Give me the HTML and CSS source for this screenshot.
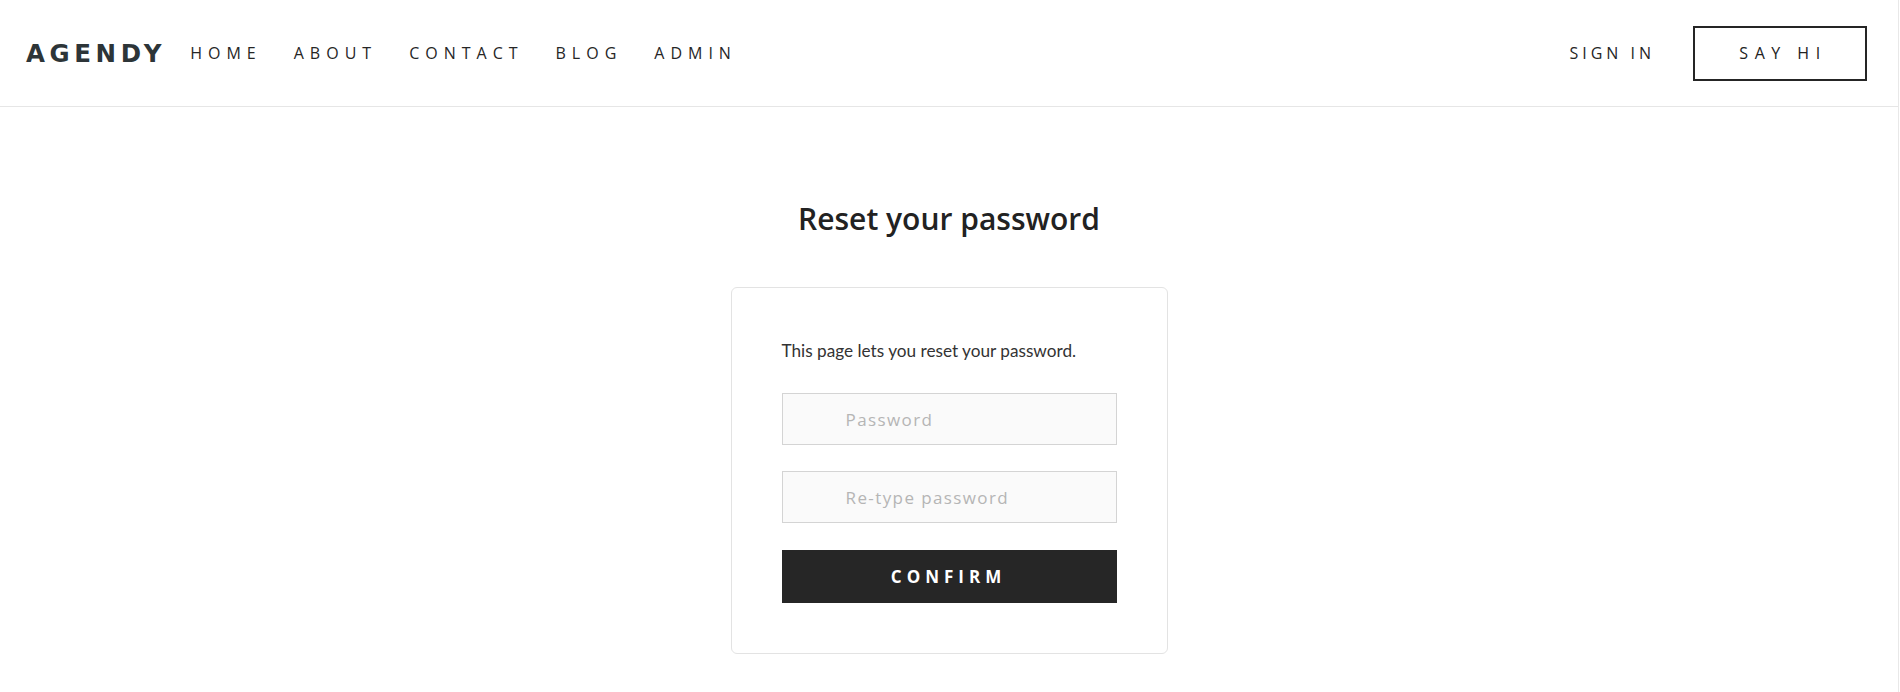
FILE: index.html
```html
<!DOCTYPE html>
<html lang="en">
<head>
<meta charset="utf-8">
<title>Reset your password</title>
<link rel="stylesheet" href="styles.css">
</head>
<body>
<div class="page">
<header class="topbar">
  <div class="topbar-left">
    <a class="logo" href="#">AGENDY</a>
    <nav class="main-nav">
      <a href="#">HOME</a>
      <a href="#">ABOUT</a>
      <a href="#">CONTACT</a>
      <a href="#">BLOG</a>
      <a href="#">ADMIN</a>
    </nav>
  </div>
  <div class="topbar-right">
    <a class="sign-in" href="#">SIGN IN</a>
    <a class="say-hi" href="#">SAY HI</a>
  </div>
</header>
<main class="content">
  <h1 class="title">Reset your password</h1>
  <form class="card">
    <p class="intro">This page lets you reset your password.</p>
    <input class="field" type="password" placeholder="Password">
    <input class="field" type="password" placeholder="Re-type password">
    <button class="confirm" type="button">CONFIRM</button>
  </form>
</main>
</div>
</body>
</html>
```

FILE: styles.css
```css
* { box-sizing: border-box; }
html, body { margin: 0; padding: 0; background: #fff; }
body { font-family: "Open Sans", "Liberation Sans", sans-serif; color: #333; }
a { text-decoration: none; color: inherit; }

.page {
  min-height: 100vh;
  margin-right: 1px;
  border-right: 1px solid #e8e8e8;
}

.topbar {
  height: 107px;
  border-bottom: 1px solid #e6e6e6;
  display: flex;
  align-items: center;
  justify-content: space-between;
  padding: 0 31px 0 26px;
}
.topbar-left { display: flex; align-items: center; }
.logo {
  font-family: "DejaVu Sans", Inter, sans-serif;
  font-weight: 700;
  font-size: 24.5px;
  letter-spacing: 4.6px;
  color: #2d3538;
  margin-right: 24px;
}
.main-nav { display: flex; }
.main-nav a, .sign-in {
  font-size: 16px;
  letter-spacing: 6px;
  color: #262626;
  margin-right: 32px;
}
.topbar-right { display: flex; align-items: center; }
.sign-in { letter-spacing: 4px; margin-right: 38px; }
.say-hi {
  width: 174px;
  height: 55px;
  border: 2px solid #252525;
  display: flex;
  align-items: center;
  justify-content: center;
  font-size: 16px;
  letter-spacing: 6.5px;
  padding-left: 6px;
  color: #222;
}

.content { display: flex; flex-direction: column; align-items: center; }
.title {
  margin: 92px 0 0;
  font-size: 30px;
  font-weight: 600;
  color: #222;
  line-height: 40px;
}
.card {
  margin-top: 48px;
  width: 437px;
  border: 1px solid #e3e3e3;
  border-radius: 6px;
  padding: 50px;
  display: flex;
  flex-direction: column;
}
.intro {
  margin: 0 0 30px;
  font-family: Lato, "Liberation Sans", sans-serif;
  font-size: 17.2px;
  line-height: 25px;
  color: #333;
}
.field {
  height: 52px;
  border: 1px solid #d4d4d4;
  background: #fafafa;
  margin-bottom: 26px;
  padding: 0 0 0 63px;
  font-family: "Open Sans", sans-serif;
  font-size: 17px;
  letter-spacing: 1.4px;
  outline: none;
  border-radius: 0;
}
.field::placeholder { color: #b5b5b5; }
.confirm {
  height: 53px;
  margin-top: 1px;
  border: 0;
  background: #262626;
  color: #fff;
  font-family: "Open Sans", sans-serif;
  font-weight: 700;
  font-size: 17px;
  letter-spacing: 5px;
  padding-left: 5px;
}
```
